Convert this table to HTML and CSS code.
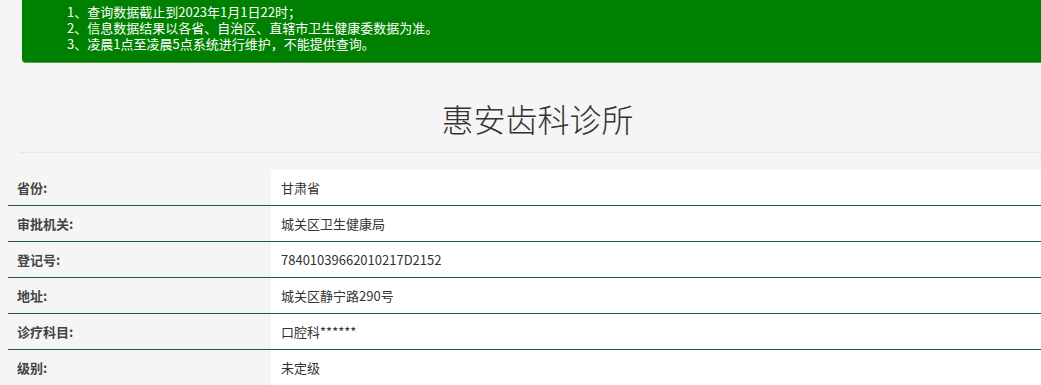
FILE: index.html
```html
<!DOCTYPE html>
<html lang="zh-CN">
<head>
<meta charset="utf-8">
<title>惠安齿科诊所</title>
<link rel="stylesheet" href="styles.css">
</head>
<body>
<div class="notice">
  <p>1、查询数据截止到2023年1月1日22时；</p>
  <p>2、信息数据结果以各省、自治区、直辖市卫生健康委数据为准。</p>
  <p>3、凌晨1点至凌晨5点系统进行维护，不能提供查询。</p>
</div>
<h1 class="title">惠安齿科诊所</h1>
<div class="info">
  <div class="row"><div class="label">省份:</div><div class="value">甘肃省</div></div>
  <div class="row"><div class="label">审批机关:</div><div class="value">城关区卫生健康局</div></div>
  <div class="row"><div class="label">登记号:</div><div class="value">78401039662010217D2152</div></div>
  <div class="row"><div class="label">地址:</div><div class="value">城关区静宁路290号</div></div>
  <div class="row"><div class="label">诊疗科目:</div><div class="value">口腔科******</div></div>
  <div class="row"><div class="label">级别:</div><div class="value">未定级</div></div>
</div>
</body>
</html>
```

FILE: styles.css
```css
html, body {
  margin: 0;
  padding: 0;
  overflow: hidden;
}
body {
  background: #f5f5f5;
  font-family: "Noto Sans CJK SC", "Noto Sans", "Liberation Sans", sans-serif;
  color: #333;
  font-size: 13px;
}
.notice {
  margin-left: 22px;
  background: #008000;
  color: #fff;
  padding: 4px 0 10px 45px;
  border-radius: 0 0 0 4px;
  border-bottom: 1px solid #5a9a4a;
  height: 48px;
}
.notice p {
  margin: 0;
  line-height: 16px;
  font-size: 13px;
}
.title {
  margin: 0 0 0 20px;
  padding: 35px 0 14px 14px;
  text-align: center;
  font-size: 32px;
  font-weight: 300;
  line-height: 40px;
  color: #333;
  border-bottom: 1px solid #e6e6e6;
}
.info {
  margin: 17px 0 0 8px;
}
.row {
  display: flex;
  border-bottom: 1px solid #1e5a3a;
  height: 35px;
  align-items: stretch;
}
.label {
  width: 254px;
  padding-left: 9px;
  display: flex;
  align-items: center;
  font-weight: bold;
  color: #444;
}
.value {
  flex: 1;
  background: #fff;
  padding-left: 10px;
  display: flex;
  align-items: center;
  color: #333;
}
```
